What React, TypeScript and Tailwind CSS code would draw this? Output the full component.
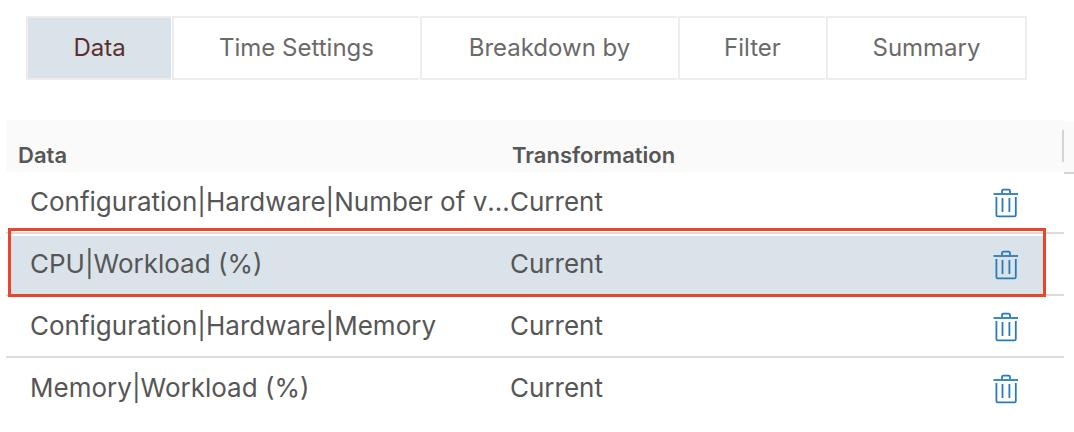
import { useState } from 'react';
import clsx from 'clsx';

interface DataRow {
  id: number;
  name: string;
  transformation: string;
}

const tabs = ['Data', 'Time Settings', 'Breakdown by', 'Filter', 'Summary'];

const initialRows: DataRow[] = [
  { id: 1, name: 'Configuration|Hardware|Number of vCPUs', transformation: 'Current' },
  { id: 2, name: 'CPU|Workload (%)', transformation: 'Current' },
  { id: 3, name: 'Configuration|Hardware|Memory', transformation: 'Current' },
  { id: 4, name: 'Memory|Workload (%)', transformation: 'Current' },
];

function TrashIcon() {
  return (
    <svg width="26" height="30" viewBox="0 0 26 30" fill="none" stroke="#2b7bb9" strokeWidth="1.8" aria-hidden="true">
      <path d="M0.5 6H25" />
      <path d="M9 5V3Q9 1.7 10.3 1.7H15.7Q17 1.7 17 3V5" />
      <path d="M3.4 9V27Q3.4 28.4 4.8 28.4H21.4Q22.8 28.4 22.8 27V9" />
      <path d="M9.5 10V24M16.4 10V24" />
    </svg>
  );
}

export default function App() {
  const [activeTab, setActiveTab] = useState('Data');
  const [rows, setRows] = useState(initialRows);
  const [selectedId, setSelectedId] = useState(2);

  return (
    <div className="bg-white pt-4 font-['Inter',sans-serif] text-[#565656]">
      <div role="tablist" className="ml-[26px] mr-[47px] grid grid-cols-[145fr_247fr_257fr_147fr_201fr] gap-px">
        {tabs.map((tab) => (
          <button
            key={tab}
            type="button"
            role="tab"
            aria-selected={tab === activeTab}
            onClick={() => setActiveTab(tab)}
            className={clsx(
              'h-16 whitespace-nowrap border-y-2 border-l-2 border-[#ededed] text-2xl last:border-r-2',
              tab === activeTab ? 'bg-[#dae3e9] text-[#5b2f2f]' : 'bg-white text-[#6a6a6a]'
            )}
          >
            {tab}
          </button>
        ))}
      </div>

      <div className="mt-10 flex items-start pl-1.5">
        <div className="isolate min-w-0 flex-1">
          <table className="w-full table-fixed border-separate border-spacing-0 text-left">
            <colgroup>
              <col className="w-[504px]" />
              <col />
              <col className="w-[71px]" />
            </colgroup>
            <thead>
              <tr className="h-[52px] bg-[#fafafa] text-[22px] leading-7">
                <th className="pb-[3px] pl-3 align-bottom font-semibold">Data</th>
                <th className="pb-[3px] pl-0.5 align-bottom font-semibold">Transformation</th>
                <th className="p-0">
                  <span className="ml-auto block h-8 w-0.5 bg-[#d4d4d4]" />
                </th>
              </tr>
            </thead>
            <tbody className="text-[26px] leading-8">
              {rows.map((row, i) => {
                const border = i < rows.length - 1 ? 'border-b-2 border-[#dcdcdc]' : 'border-b-2 border-transparent';
                return (
                  <tr key={row.id} onClick={() => setSelectedId(row.id)} className="relative h-[62px]">
                    <td className={clsx('truncate pl-6', border)}>
                      {row.id === selectedId && (
                        <>
                          <span className="absolute bottom-0 left-1 right-5 top-0.5 -z-10 bg-[#dae3e9]" />
                          <span className="pointer-events-none absolute -bottom-px -top-1.5 left-0.5 right-[18px] z-10 border-[3px] border-[#e9452a]" />
                        </>
                      )}
                      {row.name}
                    </td>
                    <td className={clsx('truncate', border)}>{row.transformation}</td>
                    <td className={clsx('p-0', border)}>
                      <button
                        type="button"
                        aria-label={`Delete ${row.name}`}
                        onClick={() => setRows(rows.filter((r) => r.id !== row.id))}
                        className="block pt-0.5"
                      >
                        <TrashIcon />
                      </button>
                    </td>
                  </tr>
                );
              })}
            </tbody>
          </table>
        </div>
        <div className="mt-0.5 h-[52px] w-2.5 border-b-2 border-[#d4d4d4] bg-[#fafafa]" />
      </div>
    </div>
  );
}
